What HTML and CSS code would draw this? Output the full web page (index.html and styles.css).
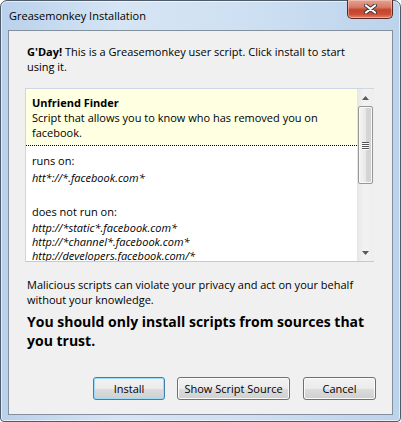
FILE: index.html
```html
<!DOCTYPE html>
<html>
<head>
<meta charset="utf-8">
<title>Greasemonkey Installation</title>
<link rel="stylesheet" href="styles.css">
</head>
<body>
<div class="window">
  <div class="titlebar">
    <span class="title">Greasemonkey Installation</span>
    <div class="close">
      <svg width="13" height="10" viewBox="0 0 13 10">
        <path d="M2 1.5 L11 8.5 M11 1.5 L2 8.5" stroke="#3a3a3a" stroke-width="4" stroke-linecap="round" fill="none"/>
        <path d="M2 1.5 L11 8.5 M11 1.5 L2 8.5" stroke="#ffffff" stroke-width="2.2" stroke-linecap="round" fill="none"/>
      </svg>
    </div>
  </div>
  <div class="client">
    <p class="intro"><b>G'Day!</b> This is a Greasemonkey user script. Click install to start using it.</p>
    <div class="info">
      <div class="info-scroll">
        <div class="info-head">
          <div class="name">Unfriend Finder</div>
          <div class="desc">Script that allows you to know who has removed you on facebook.</div>
        </div>
        <div class="info-body">
          <div class="label">runs on:</div>
          <ul class="urls first">
            <li>htt*://*.facebook.com*</li>
          </ul>
          <div class="label gap">does not run on:</div>
          <ul class="urls">
            <li>http://*static*.facebook.com*</li>
            <li>http://*channel*.facebook.com*</li>
            <li>http://developers.facebook.com/*</li>
          </ul>
        </div>
      </div>
      <div class="scrollbar">
        <div class="arrow">
          <svg width="7" height="4" viewBox="0 0 7 4"><path d="M0 4 L3.5 0 L7 4 Z" fill="#5a5a5a"/></svg>
        </div>
        <div class="track">
          <div class="thumb">
            <div class="grip"><span></span><span></span><span></span><span></span></div>
          </div>
        </div>
        <div class="arrow">
          <svg width="7" height="4" viewBox="0 0 7 4"><path d="M0 0 L7 0 L3.5 4 Z" fill="#5a5a5a"/></svg>
        </div>
      </div>
    </div>
    <p class="warn">Malicious scripts can violate your privacy and act on your behalf without your knowledge.</p>
    <p class="strong">You should only install scripts from sources that you trust.</p>
    <div class="buttons">
      <button class="btn btn-default btn-install">Install</button>
      <button class="btn btn-source">Show Script Source</button>
      <button class="btn btn-cancel">Cancel</button>
    </div>
  </div>
</div>
</body>
</html>
```
FILE: styles.css
```css
html, body {
  margin: 0;
  padding: 0;
  background: #ffffff;
}
body {
  font-family: "Open Sans", "Noto Sans", sans-serif;
  font-size: 11px;
  color: #000;
}
.window {
  width: 401px;
  height: 422px;
  box-sizing: border-box;
  border: 1px solid #4f5b69;
  border-radius: 7px 7px 4px 4px;
  background: linear-gradient(90deg, #b9d1eb 0%, #d6e5f4 30%, #cfe0f2 60%, #bcd3ec 100%);
  padding: 0 7px 6px 7px;
  display: flex;
  flex-direction: column;
  box-shadow: inset 0 0 0 1px rgba(255,255,255,0.6);
}
.titlebar {
  height: 29px;
  display: flex;
  align-items: center;
  flex: none;
}
.title {
  font-size: 11px;
  color: #000;
  padding-left: 1px;
  padding-bottom: 1px;
}
.close {
  margin-left: auto;
  align-self: flex-start;
  margin-top: -1px;
  width: 46px;
  height: 19px;
  box-sizing: border-box;
  border: 1px solid #5b2a22;
  border-top: none;
  border-radius: 0 0 5px 5px;
  background: linear-gradient(180deg, #e6a294 0%, #d77a66 40%, #c4432c 55%, #cc4f36 80%, #e2866d 100%);
  box-shadow: inset 0 0 0 1px rgba(255,220,210,0.45);
  display: flex;
  align-items: center;
  justify-content: center;
}
.client {
  flex: 1;
  background: #f0f0f0;
  border: 1px solid #838f9c;
  display: flex;
  flex-direction: column;
  padding: 0 16px 14px 16px;
}
.intro {
  margin: 13px 0 0 0;
  padding-left: 2px;
  line-height: 15px;
  width: 330px;
}
.info {
  margin: 14px 2px 0 0;
  height: 172px;
  border: 1px solid #cdd7e1;
  border-bottom-color: #b7cde3;
  border-right: none;
  display: flex;
  overflow: hidden;
  background: #ffffff;
}
.info-scroll {
  flex: 1;
  overflow: hidden;
}
.info-head {
  background: #ffffe1;
  padding: 6px 6px 5px 6px;
  line-height: 15px;
  border-bottom: 1px dotted #000;
}
.name {
  font-weight: bold;
}
.desc {
  width: 320px;
}
.info-body {
  padding: 7px 6px 0 6px;
  line-height: 15px;
}
.label.gap {
  margin-top: 19px;
}
.urls {
  list-style: none;
  margin: 2px 0 0 0;
  padding: 0;
  font-style: italic;
  line-height: 14px;
}
.urls.first {
  margin-top: 3px;
}
.scrollbar {
  width: 17px;
  flex: none;
  background: linear-gradient(90deg, #e6e6e6 0%, #f2f2f2 40%, #eeeeee 100%);
  display: flex;
  flex-direction: column;
}
.arrow {
  height: 17px;
  flex: none;
  display: flex;
  align-items: center;
  justify-content: center;
}
.track {
  flex: 1;
  padding: 0 1px;
}
.thumb {
  height: 78px;
  box-sizing: border-box;
  border: 1px solid #979797;
  border-radius: 2px;
  background: linear-gradient(90deg, #f4f4f4 0%, #e8e8e8 50%, #d6d6d6 51%, #d2d2d2 100%);
  box-shadow: inset 0 0 0 1px #f8f8f8;
  display: flex;
  align-items: center;
  justify-content: center;
}
.grip {
  display: flex;
  flex-direction: column;
  gap: 1px;
}
.grip span {
  display: block;
  width: 7px;
  height: 1px;
  background: #555;
  box-shadow: 0 1px 0 #fff;
}
.warn {
  margin: 15px 0 0 0;
  padding-left: 2px;
  line-height: 15px;
  width: 340px;
}
.strong {
  margin: 5px 0 0 0;
  padding-left: 2px;
  font-size: 14px;
  font-weight: bold;
  line-height: 19px;
  width: 345px;
}
.buttons {
  margin-top: auto;
  display: flex;
  justify-content: flex-end;
  gap: 12px;
}
.btn {
  height: 23px;
  box-sizing: border-box;
  font-family: "Open Sans", "Noto Sans", sans-serif;
  font-size: 11px;
  color: #000;
  border: 1px solid #707070;
  border-radius: 3px;
  background: linear-gradient(180deg, #f2f2f2 0%, #ebebeb 50%, #dddddd 51%, #cfcfcf 100%);
  box-shadow: inset 0 0 0 1px #fbfbfb;
  padding: 0;
}
.btn-default {
  border-color: #3c7fb1;
  box-shadow: inset 0 0 0 1px #9fdcf7;
}
.btn-install { width: 72px; }
.btn-source { width: 113px; margin-right: 1px; }
.btn-cancel { width: 73px; }
```
